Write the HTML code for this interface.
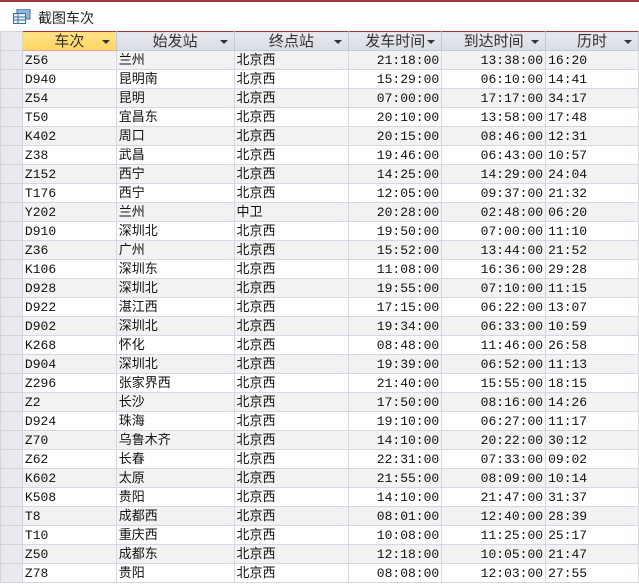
<!DOCTYPE html>
<html><head><meta charset="utf-8"><style>
*{margin:0;padding:0;box-sizing:border-box}
body{width:639px;height:584px;overflow:hidden;background:#fff;position:relative;font-family:"Liberation Mono","Noto Sans CJK SC",monospace}
.top{position:absolute;left:0;top:0;width:639px;height:2px;background:#a4373a}
.title{position:absolute;left:38px;top:8px;font:14px "Liberation Sans","Noto Sans CJK SC",sans-serif;color:#222}
.ico{position:absolute;left:13px;top:9px}
table{position:absolute;left:0;top:31px;border-collapse:collapse;table-layout:fixed}
td,th{height:19px;border:1px solid #d3d9e4;font-size:13px;line-height:17px;white-space:nowrap;overflow:hidden;color:#111;padding:0 2px;font-weight:normal}
th{background:linear-gradient(#e6e9ee,#d9dde4);border-color:#c5cbd4;font-family:"Liberation Sans","Noto Sans CJK SC",sans-serif;font-size:15px;color:#333;position:relative;border-top:1px solid #a4373a}
th .dd{position:absolute;right:6px;top:8px;width:0;height:0;border-left:4px solid transparent;border-right:4px solid transparent;border-top:4px solid #333}
th.sel{background:linear-gradient(#ffe38a,#ffd55e);border-bottom:1px solid #f0a0a0}
td.rs,th.rs{background:#e8eaef;border-color:#d0d5dd;padding:0}
tr:nth-child(even) td{background:#f2f2f2}
tr:nth-child(odd) td{background:#fff}
tr td.rs{background:#e8eaef!important}
td.r{text-align:right}
</style></head><body>
<div class="top"></div>
<svg class="ico" width="18" height="16" viewBox="0 0 18 16"><rect x="4" y="0" width="13" height="10" fill="#8fb6d9" stroke="#3d6f9c"/><rect x="0.5" y="4.5" width="12" height="10" fill="#e8f0f8" stroke="#3d6f9c"/><path d="M1 8h11M1 11h11M5 5v9" stroke="#3d6f9c"/></svg>
<div class="title">截图车次</div>
<table>
<colgroup><col style="width:22px"><col style="width:94px"><col style="width:118px"><col style="width:115px"><col style="width:93px"><col style="width:104px"><col style="width:93px"></colgroup>
<tr><th class="rs"></th><th class="sel">车次<span class="dd"></span></th><th>始发站<span class="dd"></span></th><th>终点站<span class="dd"></span></th><th>发车时间<span class="dd"></span></th><th>到达时间<span class="dd"></span></th><th>历时<span class="dd"></span></th></tr>
<tr><td class="rs"></td><td>Z56</td><td>兰州</td><td>北京西</td><td class="r">21:18:00</td><td class="r">13:38:00</td><td>16:20</td></tr>
<tr><td class="rs"></td><td>D940</td><td>昆明南</td><td>北京西</td><td class="r">15:29:00</td><td class="r">06:10:00</td><td>14:41</td></tr>
<tr><td class="rs"></td><td>Z54</td><td>昆明</td><td>北京西</td><td class="r">07:00:00</td><td class="r">17:17:00</td><td>34:17</td></tr>
<tr><td class="rs"></td><td>T50</td><td>宜昌东</td><td>北京西</td><td class="r">20:10:00</td><td class="r">13:58:00</td><td>17:48</td></tr>
<tr><td class="rs"></td><td>K402</td><td>周口</td><td>北京西</td><td class="r">20:15:00</td><td class="r">08:46:00</td><td>12:31</td></tr>
<tr><td class="rs"></td><td>Z38</td><td>武昌</td><td>北京西</td><td class="r">19:46:00</td><td class="r">06:43:00</td><td>10:57</td></tr>
<tr><td class="rs"></td><td>Z152</td><td>西宁</td><td>北京西</td><td class="r">14:25:00</td><td class="r">14:29:00</td><td>24:04</td></tr>
<tr><td class="rs"></td><td>T176</td><td>西宁</td><td>北京西</td><td class="r">12:05:00</td><td class="r">09:37:00</td><td>21:32</td></tr>
<tr><td class="rs"></td><td>Y202</td><td>兰州</td><td>中卫</td><td class="r">20:28:00</td><td class="r">02:48:00</td><td>06:20</td></tr>
<tr><td class="rs"></td><td>D910</td><td>深圳北</td><td>北京西</td><td class="r">19:50:00</td><td class="r">07:00:00</td><td>11:10</td></tr>
<tr><td class="rs"></td><td>Z36</td><td>广州</td><td>北京西</td><td class="r">15:52:00</td><td class="r">13:44:00</td><td>21:52</td></tr>
<tr><td class="rs"></td><td>K106</td><td>深圳东</td><td>北京西</td><td class="r">11:08:00</td><td class="r">16:36:00</td><td>29:28</td></tr>
<tr><td class="rs"></td><td>D928</td><td>深圳北</td><td>北京西</td><td class="r">19:55:00</td><td class="r">07:10:00</td><td>11:15</td></tr>
<tr><td class="rs"></td><td>D922</td><td>湛江西</td><td>北京西</td><td class="r">17:15:00</td><td class="r">06:22:00</td><td>13:07</td></tr>
<tr><td class="rs"></td><td>D902</td><td>深圳北</td><td>北京西</td><td class="r">19:34:00</td><td class="r">06:33:00</td><td>10:59</td></tr>
<tr><td class="rs"></td><td>K268</td><td>怀化</td><td>北京西</td><td class="r">08:48:00</td><td class="r">11:46:00</td><td>26:58</td></tr>
<tr><td class="rs"></td><td>D904</td><td>深圳北</td><td>北京西</td><td class="r">19:39:00</td><td class="r">06:52:00</td><td>11:13</td></tr>
<tr><td class="rs"></td><td>Z296</td><td>张家界西</td><td>北京西</td><td class="r">21:40:00</td><td class="r">15:55:00</td><td>18:15</td></tr>
<tr><td class="rs"></td><td>Z2</td><td>长沙</td><td>北京西</td><td class="r">17:50:00</td><td class="r">08:16:00</td><td>14:26</td></tr>
<tr><td class="rs"></td><td>D924</td><td>珠海</td><td>北京西</td><td class="r">19:10:00</td><td class="r">06:27:00</td><td>11:17</td></tr>
<tr><td class="rs"></td><td>Z70</td><td>乌鲁木齐</td><td>北京西</td><td class="r">14:10:00</td><td class="r">20:22:00</td><td>30:12</td></tr>
<tr><td class="rs"></td><td>Z62</td><td>长春</td><td>北京西</td><td class="r">22:31:00</td><td class="r">07:33:00</td><td>09:02</td></tr>
<tr><td class="rs"></td><td>K602</td><td>太原</td><td>北京西</td><td class="r">21:55:00</td><td class="r">08:09:00</td><td>10:14</td></tr>
<tr><td class="rs"></td><td>K508</td><td>贵阳</td><td>北京西</td><td class="r">14:10:00</td><td class="r">21:47:00</td><td>31:37</td></tr>
<tr><td class="rs"></td><td>T8</td><td>成都西</td><td>北京西</td><td class="r">08:01:00</td><td class="r">12:40:00</td><td>28:39</td></tr>
<tr><td class="rs"></td><td>T10</td><td>重庆西</td><td>北京西</td><td class="r">10:08:00</td><td class="r">11:25:00</td><td>25:17</td></tr>
<tr><td class="rs"></td><td>Z50</td><td>成都东</td><td>北京西</td><td class="r">12:18:00</td><td class="r">10:05:00</td><td>21:47</td></tr>
<tr><td class="rs"></td><td>Z78</td><td>贵阳</td><td>北京西</td><td class="r">08:08:00</td><td class="r">12:03:00</td><td>27:55</td></tr>
</table>
</body></html>
